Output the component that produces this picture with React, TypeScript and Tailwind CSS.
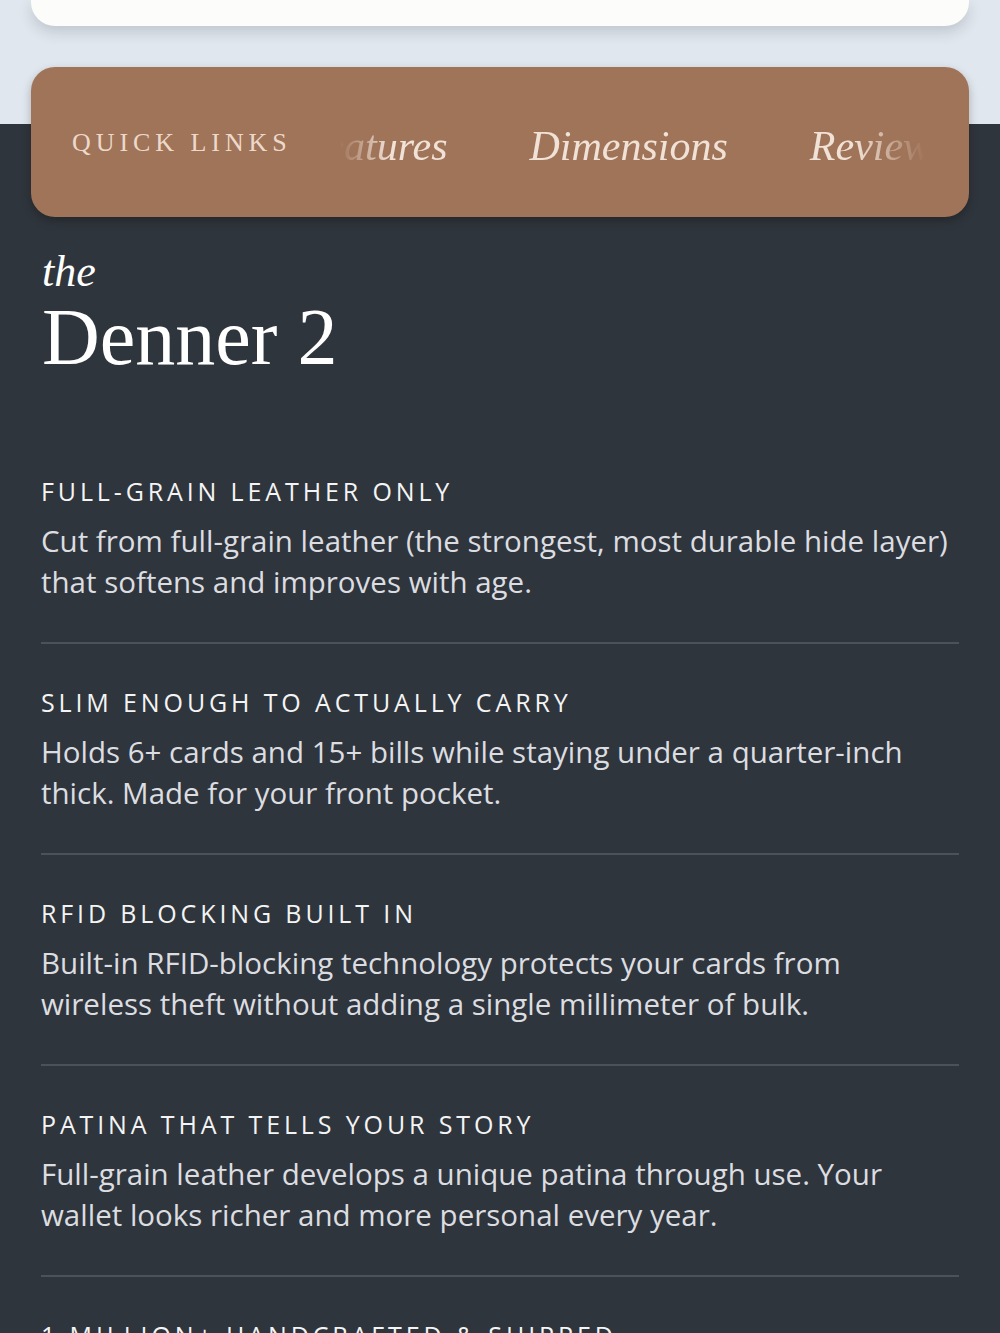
import React from "react";

const features = [
    {
        title: "Full-grain leather only",
        body: "Cut from full-grain leather (the strongest, most durable hide layer) that softens and improves with age.",
    },
    {
        title: "Slim enough to actually carry",
        body: "Holds 6+ cards and 15+ bills while staying under a quarter-inch thick. Made for your front pocket.",
    },
    {
        title: "RFID blocking built in",
        body: "Built-in RFID-blocking technology protects your cards from wireless theft without adding a single millimeter of bulk.",
    },
    {
        title: "Patina that tells your story",
        body: "Full-grain leather develops a unique patina through use. Your wallet looks richer and more personal every year.",
    },
    {
        title: "1 Million+ handcrafted & shipped",
        body: "Trusted by more than a million people who carry their Denner every single day.",
    },
];

const links = ["Features", "Dimensions", "Reviews", "FAQ"];

export default function App() {
    return (
        <div className="min-h-screen bg-[#2f353c] overflow-hidden">
            {/* Top area */}
            <div className="bg-[#e1e7ee] px-[31px] pb-[98px]">
                <div className="h-[26px] bg-[#fcfcfa] rounded-b-[24px] shadow-[0_6px_14px_rgba(40,50,60,0.18)]" />
            </div>

            {/* Quick links bar */}
            <div className="relative -mt-[57px] px-[31px]">
                <div className="h-[150px] bg-[#a07458] rounded-[24px] flex items-center pl-[41px] pr-[44px] shadow-[0_4px_10px_rgba(0,0,0,0.25)]">
                    <span className="shrink-0 font-['Liberation_Serif',serif] text-[26px] tracking-[0.19em] text-[#ecd9cc] uppercase">
                        Quick Links
                    </span>
                    <div
                        ref={(el) => {
                            if (el) el.scrollLeft = 40;
                        }}
                        className="ml-[48px] mt-[8px] flex-1 overflow-x-hidden [mask-image:linear-gradient(to_right,transparent,black_50px,black_calc(100%-70px),transparent)]"
                    >
                        <div className="flex gap-[82px] whitespace-nowrap py-[4px]">
                            {links.map((l) => (
                                <a
                                    key={l}
                                    href="#"
                                    className="font-['Liberation_Serif',serif] italic text-[42px] leading-none text-[#f1e2d8]"
                                >
                                    {l}
                                </a>
                            ))}
                        </div>
                    </div>
                </div>
            </div>

            {/* Heading */}
            <div className="px-[42px] pt-[30px] font-['Liberation_Serif',serif] text-white">
                <p className="italic text-[44px] leading-[50px]">the</p>
                <h1 className="text-[80px] leading-[80px]">Denner 2</h1>
            </div>

            {/* Feature list */}
            <div className="px-[41px] pt-[99px] font-['Open_Sans',sans-serif]">
                {features.map((f) => (
                    <div key={f.title} className="border-b-2 border-[#4a525a] pb-[40px] mb-[43px]">
                        <h3 className="uppercase text-[25px] leading-[30px] tracking-[0.155em] text-[#f4f4f4]">
                            {f.title}
                        </h3>
                        <p className="mt-[14px] text-[29.5px] leading-[41px] text-[#dcdde0]">{f.body}</p>
                    </div>
                ))}
            </div>
        </div>
    );
}
